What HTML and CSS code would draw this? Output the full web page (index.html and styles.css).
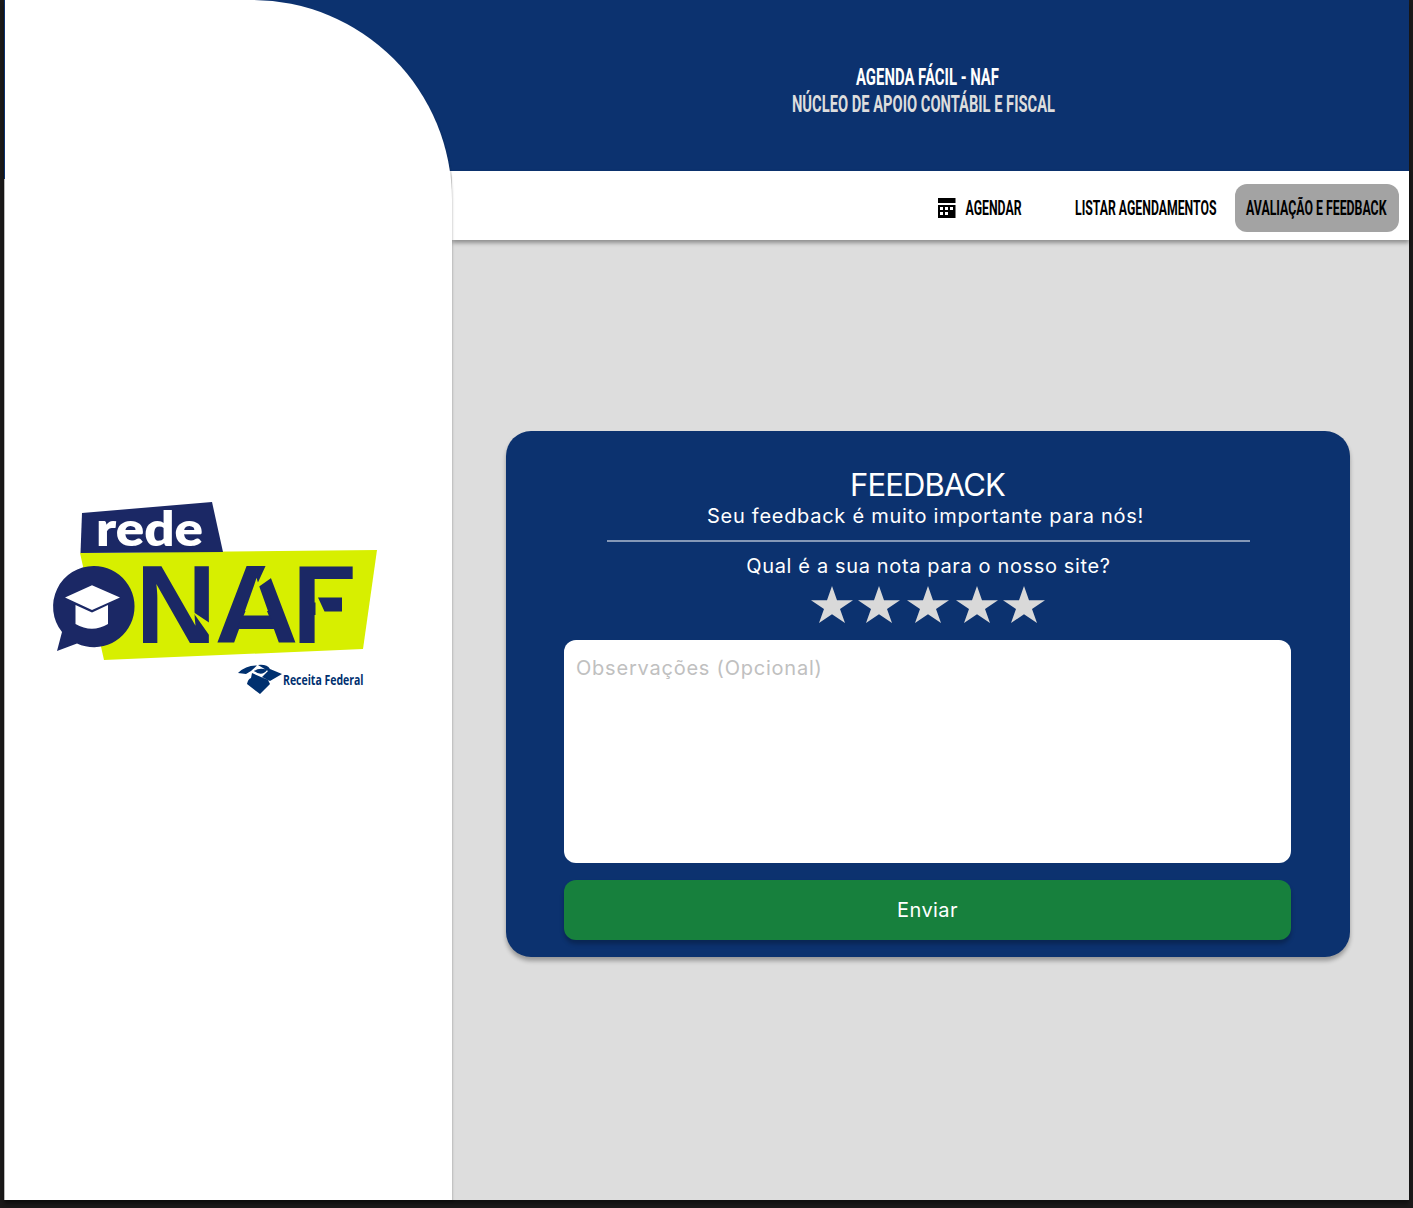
FILE: index.html
```html
<!DOCTYPE html>
<html lang="pt-BR">
<head>
<meta charset="utf-8">
<title>Agenda Fácil - NAF</title>
<link rel="stylesheet" href="styles.css">
</head>
<body>
<div class="app">
  <div class="side">
    <aside class="panel">
      <svg class="logo" viewBox="50 500 330 200" width="330" height="200" role="img" aria-label="Rede NAF">
        <path fill="#d7ef00" d="M80 553L377 550L363 649L104 660Z"/>
        <path fill="#1b2865" d="M82 513L212 502L223 552L80.500 553Z"/>
        <text class="logo-rede" x="96" y="546" textLength="107" lengthAdjust="spacingAndGlyphs">rede</text>
        <path fill="#1b2865" d="M94 566A40.600 40.600 0 1 1 77 643.500L57 651L62 632A40.600 40.600 0 0 1 94 566Z"/>
        <path fill="#fff" d="M92 585.300L120 597.500L92 610L65 597.500ZM75.500 605L92 612.500L108 605V624Q92 633.500 75.500 624Z"/>
        <g class="logo-naf">
          <text x="135.600" y="642.500">N</text>
          <text x="214.500" y="642.500" textLength="84" lengthAdjust="spacingAndGlyphs">A</text>
          <text x="292.500" y="642.500" textLength="64" lengthAdjust="spacingAndGlyphs">F</text>
        </g>
        <path fill="#d7ef00" d="M192.500 611.500L210.500 623.500V637ZM266 565L282 565L270.500 578.500L257 588L254.500 590ZM248 605H264.500L269 616H243.500ZM315.500 600H358V618H315.500Z"/>
        <path fill="#1b2865" d="M242 615.500H270L275 629H237ZM318 597.500H342V611.500H324.500Z"/>
        <path fill="#00306f" d="M238 673Q246 665 257 665.500L251 671L246 674ZM258 665Q267 664 270 669L282 674L270 681L262 677L268 671ZM252 673L268 680L270 684L260 694L247 684Q248 679 251 678ZM254 671Q260 667 267 670Q262 677 254 671Z"/>
        <text class="logo-receita" x="283" y="684.500" textLength="80.500" lengthAdjust="spacingAndGlyphs">Receita Federal</text>
      </svg>
    </aside>
  </div>
  <div class="page">
    <header class="banner">
      <svg class="title" width="264" height="56" viewBox="0 0 264 56">
        <text x="64" y="24.500" fill="#fff" textLength="143" lengthAdjust="spacingAndGlyphs">AGENDA FÁCIL - NAF</text>
        <text x="0" y="51.500" fill="#ddd" textLength="263" lengthAdjust="spacingAndGlyphs">NÚCLEO DE APOIO CONTÁBIL E FISCAL</text>
      </svg>
    </header>
    <nav class="menu">
      <a class="item item-icon">
        <svg width="18" height="20" viewBox="0 0 18 20"><path fill-rule="evenodd" d="M1 0H18.500V5H1ZM1 7H18.500V20H1ZM3 9V12H6V9ZM8 9V12H11V9ZM13 9V12H16V9ZM3 14V17H6V14ZM8 14V17H11V14Z"/></svg>
        <svg class="label" width="57" height="28" viewBox="0 0 57 28"><text x="0.500" y="20.500" textLength="56" lengthAdjust="spacingAndGlyphs">AGENDAR</text></svg>
      </a>
      <a class="item"><svg class="label" width="142" height="28" viewBox="0 0 142 28"><text x="0" y="20.500" textLength="141.500" lengthAdjust="spacingAndGlyphs">LISTAR AGENDAMENTOS</text></svg></a>
      <a class="item active"><svg class="label" width="142" height="28" viewBox="0 0 142 28"><text x="0" y="20.500" textLength="140.500" lengthAdjust="spacingAndGlyphs">AVALIAÇÃO E FEEDBACK</text></svg></a>
    </nav>
    <main class="content">
      <form class="card">
        <h1>FEEDBACK</h1>
        <p class="lead">Seu feedback é muito importante para nós!</p>
        <hr>
        <p class="question">Qual é a sua nota para o nosso site?</p>
        <svg class="stars" width="234" height="37" viewBox="0 0 234 37">
          <defs><path id="star" d="M21 0L26 14.200H42L29 23L34 37L21 28.300L8 37L13 23L0 14.200H16Z"/></defs>
          <use href="#star"/><use href="#star" x="47"/><use href="#star" x="96"/><use href="#star" x="145"/><use href="#star" x="192"/>
        </svg>
        <textarea placeholder="Observações (Opcional)"></textarea>
        <button type="button">Enviar</button>
      </form>
    </main>
  </div>
</div>
</body>
</html>
```
FILE: styles.css
```css
* { box-sizing: border-box; }

body {
  margin: 0;
  height: 1208px;
  padding: 0 4px 8px;
  background: #1b1a1a;
  font-family: Inter, sans-serif;
  overflow: hidden;
}

.app {
  display: flex;
  height: 1200px;
  background: #ddd;
  box-shadow: 0 4px 4px rgba(0, 0, 0, .4);
}

.side {
  width: 448px;
  padding-left: 1px;
  background:
    linear-gradient(#0c326f 179px, #bbb 179px) 0 0 / 1px 100% no-repeat,
    linear-gradient(#0c326f 171px, #fff 171px);
}

.panel {
  position: relative;
  z-index: 1;
  display: flex;
  align-items: center;
  height: 100%;
  padding-left: 45px;
  background: #fff;
  border-top-right-radius: 200px;
  box-shadow: 1px 2px 2px rgba(0, 0, 0, .16);
}

svg { overflow: visible; }
.logo { display: block; flex: none; }
.logo-rede { font: 800 47px Lato, sans-serif; fill: #fff; }
.logo-naf { font: bold 112px "Liberation Sans", sans-serif; fill: #1b2865; }
.logo-receita { font: bold 14px "Open Sans", sans-serif; fill: #00306f; }

.page { flex: 1; display: flex; flex-direction: column; }

.banner {
  display: flex;
  justify-content: center;
  height: 171px;
  padding: 60px 13px 0 0;
  background: #0c326f;
}
.title { font: 700 24px Roboto, sans-serif; }

.menu {
  display: flex;
  justify-content: flex-end;
  align-items: center;
  height: 69px;
  padding: 5px 10px 0 0;
  background: #fff;
  box-shadow: 0 3px 4px rgba(0, 0, 0, .35);
}
.item {
  display: flex;
  align-items: center;
  height: 48px;
  padding: 0 11px;
  border-radius: 12px;
}
.item-icon { gap: 10px; margin-right: 31px; }
.item.active { width: 164px; margin-left: 7px; background: #a3a3a3; }
.label { font: 700 20px Roboto, sans-serif; }

.content {
  flex: 1;
  display: flex;
  justify-content: center;
  align-items: flex-start;
  padding: 191px 5px 0 0;
}

.card {
  display: flex;
  flex-direction: column;
  align-items: center;
  width: 844px;
  height: 526px;
  padding: 34px 1px 0 0;
  border-radius: 25px;
  background: #0c326f;
  color: #fff;
  box-shadow: 0 4px 4px rgba(0, 0, 0, .3);
}
h1 { margin: 0; font-size: 31px; line-height: 40px; font-weight: 400; letter-spacing: -.9px; }
p { margin: 0; font-size: 20px; line-height: 24px; }
.lead { margin: -1px 4px 0 0; letter-spacing: .72px; }
hr { width: 643px; height: 2px; margin: 12px 0 12px 2px; border: 0; background: #8598b7; }
.question { margin-left: 2px; letter-spacing: .64px; }
.stars { margin-top: 8px; fill: #d9d9d9; }

textarea {
  width: 727px;
  height: 223px;
  margin: 17px 0;
  padding: 15px 12px;
  border: 0;
  border-radius: 12px;
  background: #fff;
  resize: none;
  font: 20px/26px Inter, sans-serif;
  letter-spacing: .78px;
}
textarea::placeholder { color: #c0c0c0; }

button {
  width: 727px;
  height: 60px;
  border: 0;
  border-radius: 12px;
  background: #17803d;
  color: #fff;
  font: 20px Inter, sans-serif;
  letter-spacing: .4px;
  box-shadow: 0 4px 4px rgba(0, 0, 0, .25);
}
```
